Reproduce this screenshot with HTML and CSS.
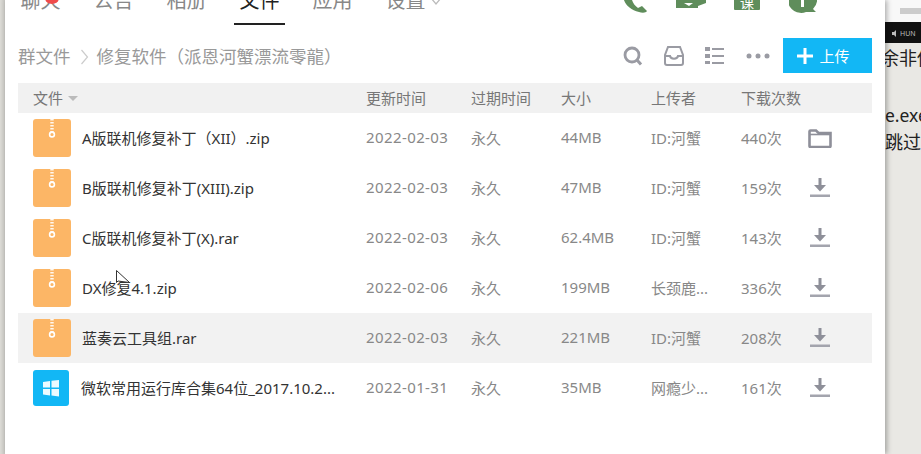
FILE: index.html
```html
<!DOCTYPE html>
<html lang="zh">
<head>
    <meta charset="UTF-8">
    <meta name="viewport" content="width=device-width, initial-scale=1.0">
    <title>群文件</title>
    <link rel="stylesheet" href="styles.css">
</head>
<body>
    <svg class="sprites" width="0" height="0">
        <symbol id="i-zip" viewBox="0 0 38 38">
            <rect width="38" height="38" rx="3" fill="#fcb666"/>
            <path d="M19 0v13" stroke="#fff" stroke-width="3.400" stroke-dasharray="1.600 1.400" fill="none" opacity=".9"/>
            <circle cx="19" cy="15.500" r="2.400" fill="none" stroke="#fff" stroke-width="1.600"/>
        </symbol>
        <symbol id="i-down" viewBox="0 0 24 20">
            <path d="M10.500 0h3v7h4.500l-6 6.500-6-6.500h4.500z" fill="#8e8f99"/>
            <rect x="2" y="16.500" width="20" height="2.500" fill="#a3a4ad"/>
        </symbol>
    </svg>

    <div class="edge"></div>

    <main class="win">
        <nav class="tabs">
            <a class="tab">聊天<i class="dot"></i></a>
            <a class="tab">公告</a>
            <a class="tab">相册</a>
            <a class="tab active">文件</a>
            <a class="tab">应用</a>
            <a class="tab">设置<svg class="chev" width="12" height="6" viewBox="0 0 12 6"><path d="M1 -2l5 6 5-6" fill="none" stroke="#bbb" stroke-width="1.300"/></svg></a>
            <div class="calls">
                <svg width="26" height="16" viewBox="0 0 26 16"><path d="M0 -4c1 8 7 14 16 16 3 1 7 1 8-1l-5-5-4 2c-3-2-5-5-6-8l2-3-3-5z" fill="#5f8d5b"/></svg>
                <svg width="31" height="16" viewBox="0 0 31 16"><path d="M0 -4h22v4l8-3v6l-8 3v2H0z" fill="#5f8d5b"/><path d="M8 3l5 3 4-3-4 0z" fill="#fff"/></svg>
                <span class="ke">课</span>
                <svg width="28" height="16" viewBox="0 0 28 16"><path d="M14 -14a13.500 13.500 0 1 0 3 26l10 0-3-3a13.500 13.500 0 0 0-10-23z" fill="#5f8d5b"/><rect x="12" y="-1" width="3" height="8" fill="#fff"/></svg>
            </div>
        </nav>

        <div class="bar">
            <div class="crumb">群文件<svg class="sep" width="10" height="16" viewBox="0 0 10 16"><path d="M1.500 1l6 7-6 7" fill="none" stroke="#ccc" stroke-width="1.200"/></svg>修复软件（派恩河蟹漂流零龍）</div>
            <div class="tools">
                <svg width="20" height="20" viewBox="0 0 20 20"><circle cx="9" cy="9" r="7" fill="none" stroke="#9a9ba3" stroke-width="2.800"/><path d="M14 14l4 4.500" stroke="#9a9ba3" stroke-width="3"/></svg>
                <svg width="20" height="20" viewBox="0 0 20 20"><path d="M4 1h12l3 8v8a2 2 0 0 1-2 2H3a2 2 0 0 1-2-2V9z" fill="none" stroke="#9a9ba3" stroke-width="2"/><path d="M1.500 10h4.500c.5 3.500 7.500 3.500 8 0h4.500" fill="none" stroke="#9a9ba3" stroke-width="2"/></svg>
                <svg width="20" height="20" viewBox="0 0 20 20"><path d="M0 1h5v4H0zM0 8h5v4H0zM0 15h5v3H0z" fill="#9a9ba3"/><path d="M7 2h12v2H7zM7 9h12v2H7zM7 16h12v2H7z" fill="#9a9ba3"/></svg>
                <svg width="24" height="20" viewBox="0 0 24 20"><circle cx="3" cy="10" r="2.500" fill="#9a9ba3"/><circle cx="12" cy="10" r="2.500" fill="#9a9ba3"/><circle cx="21" cy="10" r="2.500" fill="#9a9ba3"/></svg>
                <button class="upload"><svg width="16" height="16" viewBox="0 0 16 16"><path d="M6.500 0h3v6.500H16v3H9.500V16h-3V9.500H0v-3h6.500z" fill="#fff"/></svg>上传</button>
            </div>
        </div>

        <div class="row head">
            <span class="c-name">文件<i class="sort"></i></span>
            <span>更新时间</span>
            <span>过期时间</span>
            <span>大小</span>
            <span>上传者</span>
            <span>下载次数</span>
        </div>

        <div class="row">
            <span class="c-name"><svg class="ficon"><use href="#i-zip"/></svg><b>A版联机修复补丁（XII）.zip</b></span>
            <span class="date">2022-02-03</span><span>永久</span><span>44MB</span><span>ID:河蟹</span><span>440次</span>
            <svg class="act" width="24" height="20" viewBox="0 0 24 20"><path d="M1.500 3.500V18a1 1 0 0 0 1 1h19a1 1 0 0 0 1-1V5H10.500L8 2.500H2.500a1 1 0 0 0-1 1z" fill="none" stroke="#8e8f99" stroke-width="2.600"/><path d="M1.500 6.500h21" stroke="#8e8f99" stroke-width="1.600"/></svg>
        </div>
        <div class="row">
            <span class="c-name"><svg class="ficon"><use href="#i-zip"/></svg><b>B版联机修复补丁(XIII).zip</b></span>
            <span class="date">2022-02-03</span><span>永久</span><span>47MB</span><span>ID:河蟹</span><span>159次</span>
            <svg class="act"><use href="#i-down"/></svg>
        </div>
        <div class="row">
            <span class="c-name"><svg class="ficon"><use href="#i-zip"/></svg><b>C版联机修复补丁(X).rar</b></span>
            <span class="date">2022-02-03</span><span>永久</span><span>62.4MB</span><span>ID:河蟹</span><span>143次</span>
            <svg class="act"><use href="#i-down"/></svg>
        </div>
        <div class="row">
            <span class="c-name"><svg class="ficon"><use href="#i-zip"/></svg><b>DX修复4.1.zip</b></span>
            <span class="date">2022-02-06</span><span>永久</span><span>199MB</span><span>长颈鹿...</span><span>336次</span>
            <svg class="act"><use href="#i-down"/></svg>
        </div>
        <div class="row hover">
            <span class="c-name"><svg class="ficon"><use href="#i-zip"/></svg><b>蓝奏云工具组.rar</b></span>
            <span class="date">2022-02-03</span><span>永久</span><span>221MB</span><span>ID:河蟹</span><span>208次</span>
            <svg class="act"><use href="#i-down"/></svg>
        </div>
        <div class="row">
            <span class="c-name"><svg class="ficon win-icon" viewBox="0 0 36 36"><rect width="36" height="36" rx="3" fill="#12b7f5"/><path d="M10 12l7-1v6.500h-7zM18.500 10.800L26 10v7.500h-7.500zM10 19h7v6.500l-7-1zM18.500 19H26v7.500l-7.500-1z" fill="#fff" opacity=".92"/></svg><b>微软常用运行库合集64位_2017.10.2...</b></span>
            <span class="date">2022-01-31</span><span>永久</span><span>35MB</span><span>网瘾少...</span><span>161次</span>
            <svg class="act"><use href="#i-down"/></svg>
        </div>

        <!-- 鼠标指针 -->
        <svg class="cursor" width="14" height="16" viewBox="0 0 14 16"><path d="M.5.500v12l1.500-1.500 11.500 1.500z" fill="#fff" stroke="#333" stroke-width="1"/></svg>
    </main>

    <aside class="behind">
        <div class="b-top"><i></i></div>
        <div class="b-dark"><svg width="6" height="7" viewBox="0 0 6 7"><path d="M0 2h2l2-2v7L2 5H0z" fill="#bbb"/></svg>HUN</div>
        <p class="b-big">余非你</p>
        <p class="b-exe">e.exe</p>
        <p class="b-skip">跳过</p>
    </aside>
</body>
</html>
```

FILE: styles.css
```css
* {
    box-sizing: border-box;
}

body {
    margin: 0;
    height: 454px;
    display: flex;
    overflow: hidden;
    font-family: "Noto Sans", "Noto Sans CJK SC", sans-serif;
    background-color: #e9e8e4;
}

.sprites {
    position: absolute;
}

.edge {
    width: 5px;
    flex: none;
    background: linear-gradient(to right, #dcdbd6, #c8c7c2);
}

.win {
    position: relative;
    width: 880px;
    flex: none;
    padding: 0 13px;
    background: white;
    box-shadow: 2px 0 5px rgba(0,0,0,0.3);
    z-index: 1;
}

/* 顶部标签 */
.tabs {
    display: flex;
    height: 41px;
    margin-top: -16px;
    margin-left: -3px;
}

.tab {
    position: relative;
    width: 51px;
    margin-right: 22px;
    text-align: center;
    font-size: 20px;
    line-height: 34px;
    color: #888;
    white-space: nowrap;
}

.tab.active {
    color: #222;
    border-bottom: 2px solid #222;
}

.dot {
    position: absolute;
    left: 30px;
    top: 8px;
    width: 14px;
    height: 12px;
    border-radius: 50%;
    background: #f04b4b;
}

.chev {
    position: absolute;
    left: 50px;
    top: 16px;
}

.calls {
    display: flex;
    align-items: flex-start;
    margin-left: auto;
    padding: 16px 55px 0 0;
    gap: 27px;
}

.ke {
    width: 26px;
    height: 10px;
    margin-right: 2px;
    background: #5f8d5b;
    color: #fff;
    font-size: 14px;
    line-height: 6px;
    text-align: center;
    overflow: hidden;
    border-radius: 0 0 1px 1px;
}

/* 路径和工具 */
.bar {
    display: flex;
    align-items: center;
    justify-content: space-between;
    height: 35px;
    margin-top: 13px;
    margin-bottom: 10px;
}

.crumb {
    font-size: 17.500px;
    color: #999;
    white-space: nowrap;
}

.sep {
    margin: 0 7px 0 9px;
    vertical-align: -2px;
}

.tools {
    display: flex;
    align-items: center;
    gap: 21px;
}

.upload {
    display: flex;
    align-items: center;
    justify-content: center;
    gap: 6px;
    width: 89px;
    height: 35px;
    margin-left: -8px;
    padding: 0 8px 0 0;
    border: none;
    background-color: #12b7f5;
    color: white;
    font-family: inherit;
    font-size: 15px;
}

/* 文件列表 */
.row {
    display: grid;
    grid-template-columns: 348px 105px 90px 90px 90px 67px 24px;
    align-items: center;
    height: 50px;
    font-size: 15px;
    color: #888;
    white-space: nowrap;
}

.row.head {
    height: 30px;
    background: #f1f1f1;
    color: #777;
}

.row.hover {
    background: #f2f2f2;
}

.row > span:not(.c-name),
.c-name b,
.head .c-name {
    margin-top: -2px;
}

.date {
    letter-spacing: 0.4px;
}

.c-name {
    display: flex;
    align-items: center;
    padding-left: 15px;
}

.c-name b {
    font-weight: normal;
    color: #333;
    margin-left: 11px;
}

.ficon {
    width: 38px;
    height: 38px;
    flex: none;
}

.win-icon {
    width: 36px;
    height: 36px;
    margin-right: 1px;
}

.sort {
    margin: 3px 0 0 5px;
    border: 5px solid transparent;
    border-top-color: #bbb;
    border-bottom: none;
}

.act {
    width: 24px;
    height: 20px;
}

.cursor {
    position: absolute;
    left: 111px;
    top: 270px;
}

/* 后面的窗口 */
.behind {
    flex: 1;
    min-width: 0;
    overflow: hidden;
    white-space: nowrap;
    color: #222;
}

.behind p {
    margin: 0;
}

.b-top {
    height: 22px;
    padding: 8px 0 0 15px;
    background: #f8f8f8;
}

.b-top i {
    display: block;
    height: 6px;
    background: #ccc;
}

.b-dark {
    display: flex;
    align-items: center;
    gap: 2px;
    height: 21px;
    padding: 2px 0 0 7px;
    background: #111;
    color: #bbb;
    font-size: 7px;
}

.behind .b-big {
    height: 60px;
    margin-left: -4px;
    font-size: 18px;
    line-height: 30px;
}

.b-exe {
    height: 26px;
    font-size: 17.500px;
    line-height: 24px;
}

.b-skip {
    font-size: 18px;
    line-height: 26px;
}
```
